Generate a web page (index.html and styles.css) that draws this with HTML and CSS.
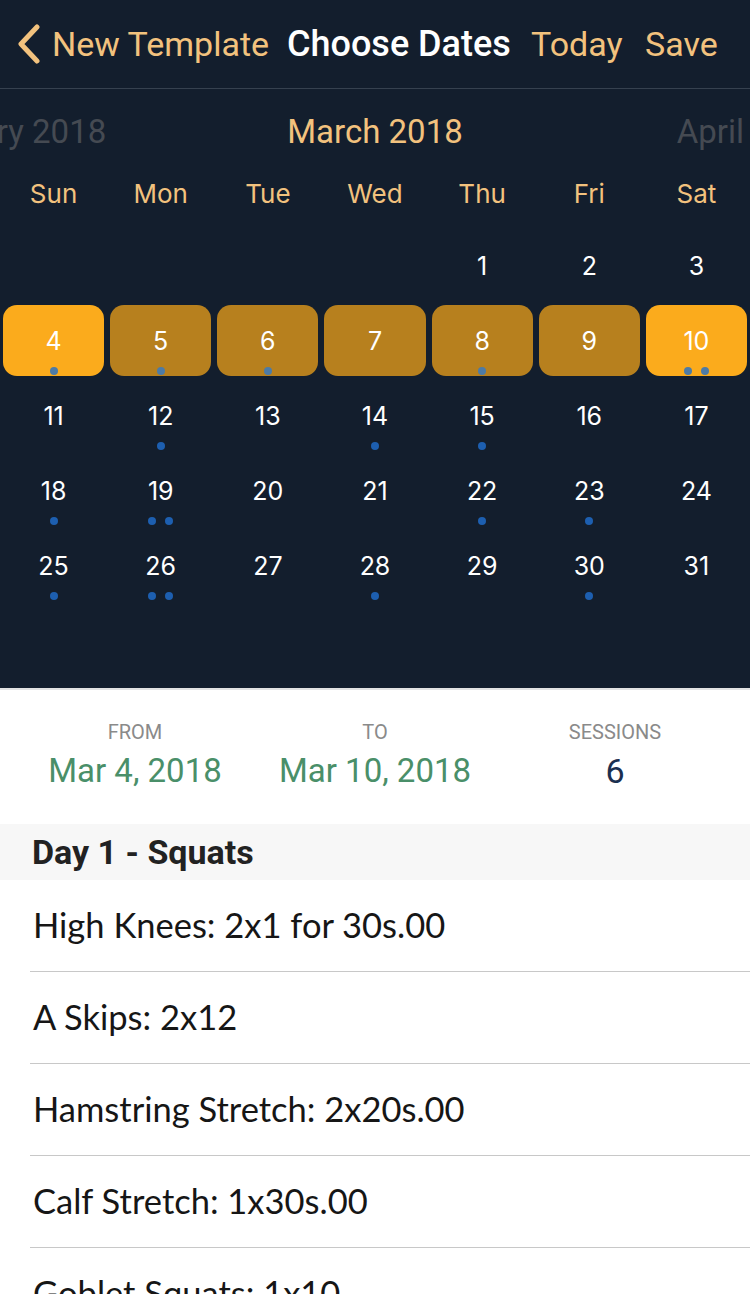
FILE: index.html
```html
<!DOCTYPE html>
<html>
<head>
<meta charset="utf-8">
<link rel="stylesheet" href="styles.css">
</head>
<body>
<div class="cal">
  <div class="nav">
    <svg class="chev" width="26" height="40" viewBox="0 0 26 40"><path d="M21 3 L5 20 L21 37" fill="none" stroke="#f2c27e" stroke-width="5" stroke-linecap="round" stroke-linejoin="round"/></svg>
    <span class="nav-back">New Template</span>
    <span class="nav-title">Choose Dates</span>
    <span class="nav-today">Today</span>
    <span class="nav-save">Save</span>
  </div>
  <div class="months">
    <div class="m-side m-prev"><span>February 2018</span></div>
    <div class="m-cur">March 2018</div>
    <div class="m-side m-next"><span>April 2018</span></div>
  </div>
  <div class="weekdays">
    <span>Sun</span><span>Mon</span><span>Tue</span><span>Wed</span><span>Thu</span><span>Fri</span><span>Sat</span>
  </div>
  <div class="grid">
    <div class="day empty"></div>
    <div class="day empty"></div>
    <div class="day empty"></div>
    <div class="day empty"></div>
    <div class="day"><span class="num">1</span><span class="dots"></span></div>
    <div class="day"><span class="num">2</span><span class="dots"></span></div>
    <div class="day"><span class="num">3</span><span class="dots"></span></div>

    <div class="day sel end"><span class="num">4</span><span class="dots"><i></i></span></div>
    <div class="day sel"><span class="num">5</span><span class="dots"><i></i></span></div>
    <div class="day sel"><span class="num">6</span><span class="dots"><i></i></span></div>
    <div class="day sel"><span class="num">7</span><span class="dots"></span></div>
    <div class="day sel"><span class="num">8</span><span class="dots"><i></i></span></div>
    <div class="day sel"><span class="num">9</span><span class="dots"></span></div>
    <div class="day sel end"><span class="num">10</span><span class="dots"><i></i><i></i></span></div>

    <div class="day"><span class="num">11</span><span class="dots"></span></div>
    <div class="day"><span class="num">12</span><span class="dots"><i></i></span></div>
    <div class="day"><span class="num">13</span><span class="dots"></span></div>
    <div class="day"><span class="num">14</span><span class="dots"><i></i></span></div>
    <div class="day"><span class="num">15</span><span class="dots"><i></i></span></div>
    <div class="day"><span class="num">16</span><span class="dots"></span></div>
    <div class="day"><span class="num">17</span><span class="dots"></span></div>

    <div class="day"><span class="num">18</span><span class="dots"><i></i></span></div>
    <div class="day"><span class="num">19</span><span class="dots"><i></i><i></i></span></div>
    <div class="day"><span class="num">20</span><span class="dots"></span></div>
    <div class="day"><span class="num">21</span><span class="dots"></span></div>
    <div class="day"><span class="num">22</span><span class="dots"><i></i></span></div>
    <div class="day"><span class="num">23</span><span class="dots"><i></i></span></div>
    <div class="day"><span class="num">24</span><span class="dots"></span></div>

    <div class="day"><span class="num">25</span><span class="dots"><i></i></span></div>
    <div class="day"><span class="num">26</span><span class="dots"><i></i><i></i></span></div>
    <div class="day"><span class="num">27</span><span class="dots"></span></div>
    <div class="day"><span class="num">28</span><span class="dots"><i></i></span></div>
    <div class="day"><span class="num">29</span><span class="dots"></span></div>
    <div class="day"><span class="num">30</span><span class="dots"><i></i></span></div>
    <div class="day"><span class="num">31</span><span class="dots"></span></div>
  </div>
</div>

<div class="summary">
  <div class="col"><div class="lbl">FROM</div><div class="val">Mar 4, 2018</div></div>
  <div class="col"><div class="lbl">TO</div><div class="val">Mar 10, 2018</div></div>
  <div class="col"><div class="lbl">SESSIONS</div><div class="val count">6</div></div>
</div>

<div class="section">Day 1 - Squats</div>
<div class="list">
  <div class="row">High Knees: 2x1 for 30s.00</div>
  <div class="row">A Skips: 2x12</div>
  <div class="row">Hamstring Stretch: 2x20s.00</div>
  <div class="row">Calf Stretch: 1x30s.00</div>
  <div class="row">Goblet Squats: 1x10</div>
</div>
</body>
</html>
```

FILE: styles.css
```css
html, body {
  margin: 0;
  padding: 0;
  background: #ffffff;
}
body {
  width: 750px;
  height: 1294px;
  overflow: hidden;
  font-family: "Inter", "Roboto", sans-serif;
}
.cal {
  background: #131e2d;
  padding-bottom: 85px;
}
.nav {
  height: 88px;
  border-bottom: 1px solid #36414f;
  display: flex;
  align-items: center;
  font-family: "Roboto", sans-serif;
  font-size: 34px;
  color: #f2c27e;
}
.chev {
  margin-left: 16px;
  flex: none;
}
.nav-back {
  margin-left: 10px;
  width: 235px;
}
.nav-title {
  color: #ffffff;
  font-weight: 500;
  font-size: 36px;
  width: 244px;
}
.nav-today {
  width: 114px;
}
.months {
  height: 84px;
  display: grid;
  grid-template-columns: 1fr auto 1fr;
  align-items: center;
  font-family: "Roboto", sans-serif;
  font-size: 33px;
  overflow: hidden;
  white-space: nowrap;
}
.m-cur {
  color: #f2c27e;
}
.m-side {
  color: #454a52;
  display: flex;
  overflow: hidden;
}
.m-prev {
  justify-content: flex-end;
  padding-right: 181px;
}
.m-next {
  justify-content: flex-start;
  padding-left: 214px;
}
.weekdays {
  height: 40px;
  margin-bottom: 15px;
  display: grid;
  grid-template-columns: repeat(7, 1fr);
  align-items: center;
  text-align: center;
  color: #f2c27e;
  font-size: 26px;
}
.grid {
  display: grid;
  grid-template-columns: repeat(7, 1fr);
  grid-auto-rows: 75px;
}
.day {
  margin: 2px 3px;
  border-radius: 14px;
  display: flex;
  flex-direction: column;
  align-items: center;
  padding-top: 20px;
  box-sizing: border-box;
  color: #ffffff;
}
.num {
  height: 32px;
  line-height: 32px;
  font-size: 25px;
}
.dots {
  margin-top: 10px;
  height: 8px;
  display: flex;
  gap: 9px;
}
.dots i {
  width: 8px;
  height: 8px;
  border-radius: 50%;
  background: #1d5fb0;
}
.sel {
  background: #b7801e;
}
.sel.end {
  background: #fbab1c;
}
.sel .dots i {
  background: #4d7ba6;
}
.summary {
  border-top: 2px solid #e3e3e3;
  display: grid;
  grid-template-columns: repeat(3, 1fr);
  padding: 31px 15px 34px;
  text-align: center;
}
.lbl {
  font-family: "Roboto", sans-serif;
  font-size: 20px;
  line-height: 22px;
  color: #8a8a8a;
}
.val {
  margin-top: 9px;
  font-family: "Roboto", sans-serif;
  font-size: 33px;
  line-height: 38px;
  color: #4a8f69;
}
.val.count {
  color: #1b2f50;
  font-size: 34px;
}
.section {
  height: 56px;
  background: #f7f7f7;
  display: flex;
  align-items: center;
  padding-left: 32px;
  font-family: "Roboto", sans-serif;
  font-weight: 700;
  font-size: 34px;
  color: #222222;
}
.list {
  background: #ffffff;
}
.row {
  margin-left: 30px;
  padding-left: 3px;
  height: 92px;
  border-bottom: 1px solid #c8c8c8;
  display: flex;
  align-items: center;
  font-family: "Lato", sans-serif;
  font-size: 34.5px;
  color: #161616;
  padding-bottom: 2px;
  box-sizing: border-box;
}
```
